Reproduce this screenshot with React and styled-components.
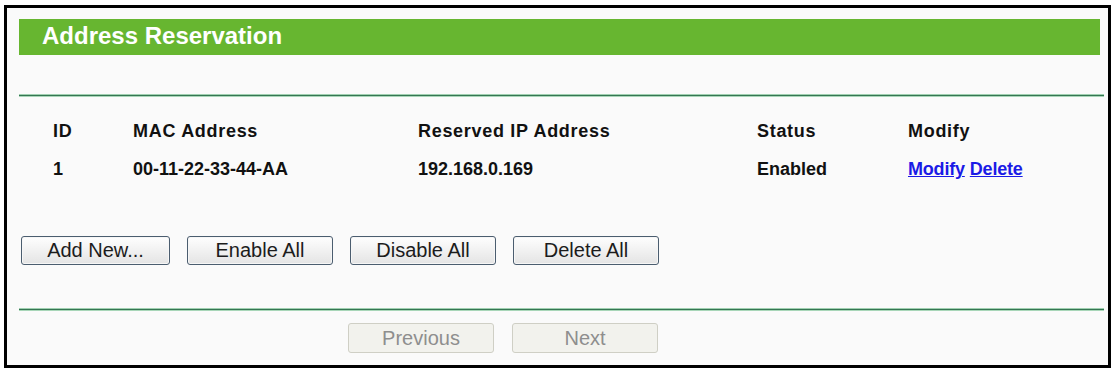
import React from "react";
import styled, { createGlobalStyle } from "styled-components";

const GlobalStyle = createGlobalStyle`
  html, body {
    margin: 0;
    padding: 0;
    background: #ffffff;
  }
  body {
    font-family: "Liberation Sans", Arial, sans-serif;
  }
`;

const rows = [
  { id: "1", mac: "00-11-22-33-44-AA", ip: "192.168.0.169", status: "Enabled" },
];

const App = () => {
  return (
    <>
      <GlobalStyle />
      <Frame>
        <Header>
          <Title>Address Reservation</Title>
        </Header>
        <Rule $top={39} />
        <Table>
          <Row $head>
            <Cell>ID</Cell>
            <Cell>MAC Address</Cell>
            <Cell>Reserved IP Address</Cell>
            <Cell>Status</Cell>
            <Cell>Modify</Cell>
          </Row>
          {rows.map((r) => (
            <Row key={r.id}>
              <Cell>{r.id}</Cell>
              <Cell>{r.mac}</Cell>
              <Cell>{r.ip}</Cell>
              <Cell>{r.status}</Cell>
              <Cell>
                <Link href="#">Modify</Link> <Link href="#">Delete</Link>
              </Cell>
            </Row>
          ))}
        </Table>
        <Actions>
          <Button $width={149}>Add New...</Button>
          <Button>Enable All</Button>
          <Button>Disable All</Button>
          <Button>Delete All</Button>
        </Actions>
        <Rule $top={43} />
        <Pager>
          <Button disabled>Previous</Button>
          <Button disabled>Next</Button>
        </Pager>
      </Frame>
    </>
  );
};

const Frame = styled.div`
  box-sizing: border-box;
  margin: 5px 1px 0 4px;
  height: 363px;
  border: 3px solid #000;
  background: #fafafa;
  padding: 11px 7px 0 12px;
`;

const Header = styled.div`
  height: 36px;
  margin-right: 1px;
  background: #67b630;
  display: flex;
  align-items: center;
  padding: 0 0 2px 23px;
  box-sizing: border-box;
`;

const Title = styled.div`
  color: #fff;
  font-size: 24px;
  font-weight: bold;
`;

const Rule = styled.div`
  height: 3px;
  margin-top: ${(p) => p.$top}px;
  margin-right: -3px;
  background: linear-gradient(#9fd0b0 0, #9fd0b0 1px, #357552 1px, #357552 2px, #a8d6b8 2px);
`;

const Table = styled.div`
  margin-top: 15px;
  padding-left: 34px;
`;

const Row = styled.div`
  display: grid;
  grid-template-columns: 80px 285px 339px 151px 1fr;
  height: 38px;
  line-height: 38px;
  font-size: 18px;
  font-weight: bold;
  color: #111;
  letter-spacing: ${(p) => (p.$head ? "0.7px" : "0")};
`;

const Cell = styled.div`
  white-space: nowrap;
`;

const Link = styled.a`
  color: #1a1ae6;
  text-decoration: underline;
  letter-spacing: -0.2px;
`;

const Actions = styled.div`
  display: flex;
  gap: 17px;
  margin-top: 48px;
  padding-left: 2px;
`;

const Button = styled.button`
  box-sizing: border-box;
  width: ${(p) => p.$width || 146}px;
  height: 29px;
  padding: 0;
  font-family: "Liberation Sans", Arial, sans-serif;
  font-size: 20px;
  color: #1c1c1c;
  border: 1px solid #4b5d6f;
  border-radius: 3px;
  background: linear-gradient(#fefefe, #e4e4e4);
  box-shadow: inset 0 0 0 1px #f6f6f6;

  &:disabled {
    height: 30px;
    color: #8e8e8e;
    border-color: #cfcfc5;
    background: #f2f2ed;
    box-shadow: none;
  }
`;

const Pager = styled.div`
  display: flex;
  gap: 18px;
  margin-top: 12px;
  padding-left: 329px;
`;

export default App;
